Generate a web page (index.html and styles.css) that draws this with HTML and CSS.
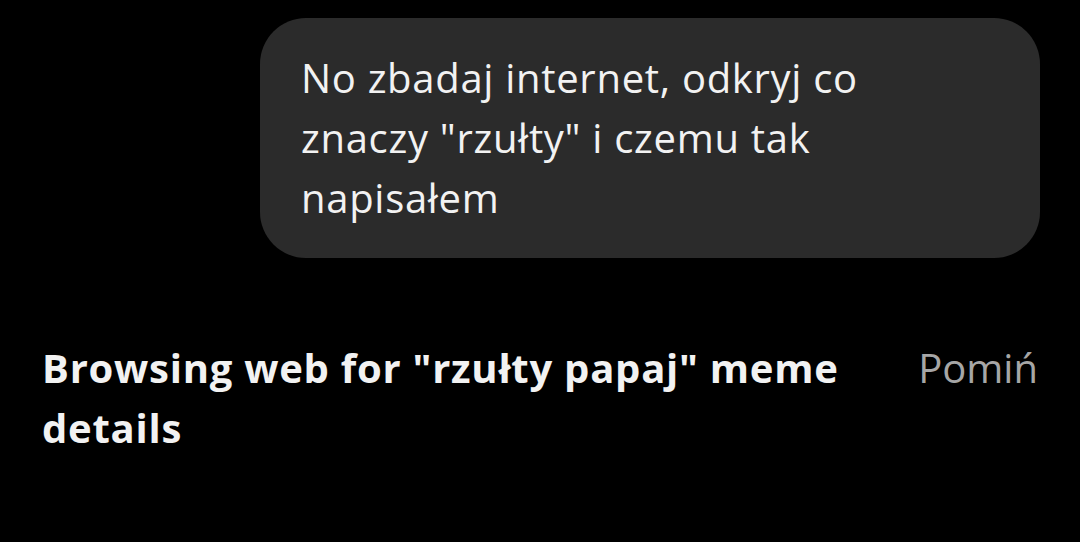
FILE: index.html
```html
<!DOCTYPE html>
<html lang="pl">
  <head>
    <meta charset="UTF-8" />
    <meta name="viewport" content="width=device-width, initial-scale=1.0" />
    <title>Chat</title>
    <link rel="stylesheet" href="styles.css">
  </head>
  <body>
    <div class="chat">
      <div class="message-row">
        <div class="bubble">No zbadaj internet, odkryj co znaczy "rzułty" i czemu tak napisałem</div>
      </div>
      <div class="status-row">
        <div class="status-text">Browsing web for "rzułty papaj" meme details</div>
        <button class="skip-btn">Pomiń</button>
      </div>
    </div>
  </body>
</html>
```

FILE: styles.css
```css
html,
body {
  margin: 0;
  background: #000;
  height: 100%;
}

.chat {
  font-family: "Open Sans", "Liberation Sans", sans-serif;
  color: #f2f2f2;
  padding-top: 18px;
}

.message-row {
  display: flex;
  justify-content: flex-end;
  padding-right: 40px;
}

.bubble {
  width: 780px;
  box-sizing: border-box;
  background-color: #2b2b2b;
  border-radius: 46px;
  padding: 30px 100px 30px 41px;
  font-size: 40px;
  letter-spacing: 0.7px;
  line-height: 60px;
}

.status-row {
  display: flex;
  justify-content: space-between;
  align-items: flex-start;
  padding: 80px 42px 0 42px;
  gap: 40px;
}

.status-text {
  font-weight: 700;
  font-size: 40px;
  letter-spacing: 0.75px;
  line-height: 60px;
  max-width: 820px;
}

.skip-btn {
  background: none;
  border: none;
  padding: 0;
  font-family: inherit;
  font-size: 40px;
  line-height: 60px;
  color: #a6a6a6;
}
```
